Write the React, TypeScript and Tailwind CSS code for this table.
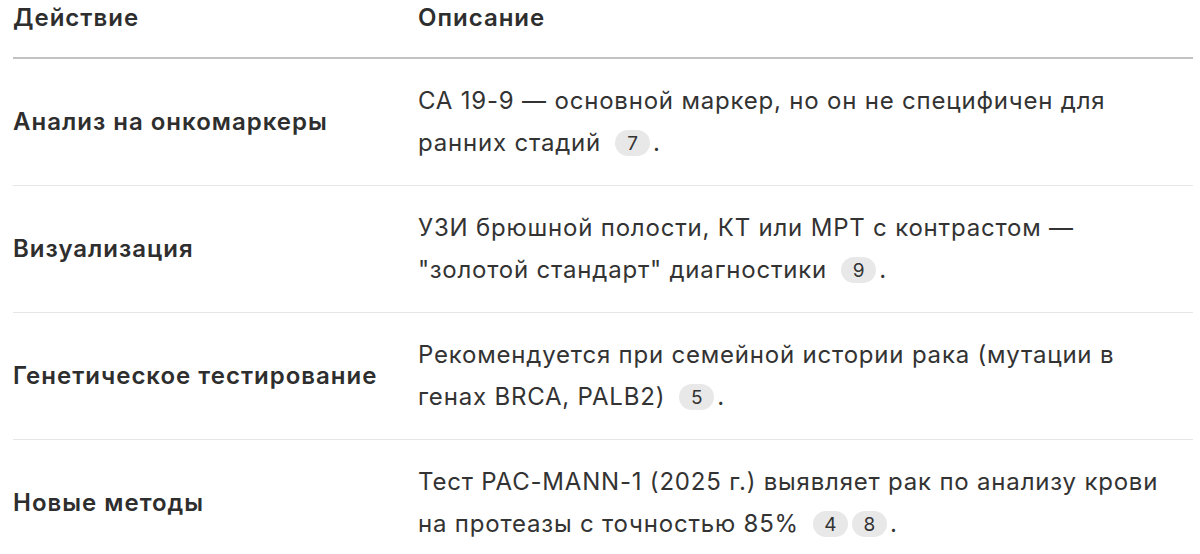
const rows: { action: string; lines: string[]; refs: string[] }[] = [
  {
    action: "Анализ на онкомаркеры",
    lines: ["CA 19-9 — основной маркер, но он не специфичен для", "ранних стадий"],
    refs: ["7"],
  },
  {
    action: "Визуализация",
    lines: ["УЗИ брюшной полости, КТ или МРТ с контрастом —", "\"золотой стандарт\" диагностики"],
    refs: ["9"],
  },
  {
    action: "Генетическое тестирование",
    lines: ["Рекомендуется при семейной истории рака (мутации в", "генах BRCA, PALB2)"],
    refs: ["5"],
  },
  {
    action: "Новые методы",
    lines: ["Тест PAC-MANN-1 (2025 г.) выявляет рак по анализу крови", "на протеазы с точностью 85%"],
    refs: ["4", "8"],
  },
];

function Ref({ n }: { n: string }) {
  return (
    <span className="inline-flex h-[26px] w-[35px] items-center justify-center rounded-full bg-[#e8e8e8] text-[19px] leading-none tracking-normal text-[#333]">
      {n}
    </span>
  );
}

export default function App() {
  return (
    <div
      className="h-[554px] w-[1200px] overflow-hidden bg-white pl-[13px] pr-[7px] text-[24px] tracking-[0.8px] text-[#333]"
      style={{ fontFamily: "Inter, 'Noto Sans', sans-serif" }}
    >
      <div className="flex h-[59px] border-b-2 border-[#c2c2c2] font-semibold leading-[36px] tracking-[1px] text-[#2e2e2e]">
        <div className="w-[405px]">Действие</div>
        <div>Описание</div>
      </div>
      {rows.map((row) => (
        <div key={row.action} className="flex h-[127px] items-center border-b border-[#e6e6e6]">
          <div className="w-[405px] font-semibold tracking-[1px] text-[#2e2e2e]">{row.action}</div>
          <div className="leading-[42px]">
            <div>{row.lines[0]}</div>
            <div className="flex items-center">
              <span>{row.lines[1]}</span>
              <span className="ml-[14px] flex gap-[4px]">
                {row.refs.map((r) => (
                  <Ref key={r} n={r} />
                ))}
              </span>
              <span className="ml-[3px]">.</span>
            </div>
          </div>
        </div>
      ))}
    </div>
  );
}
